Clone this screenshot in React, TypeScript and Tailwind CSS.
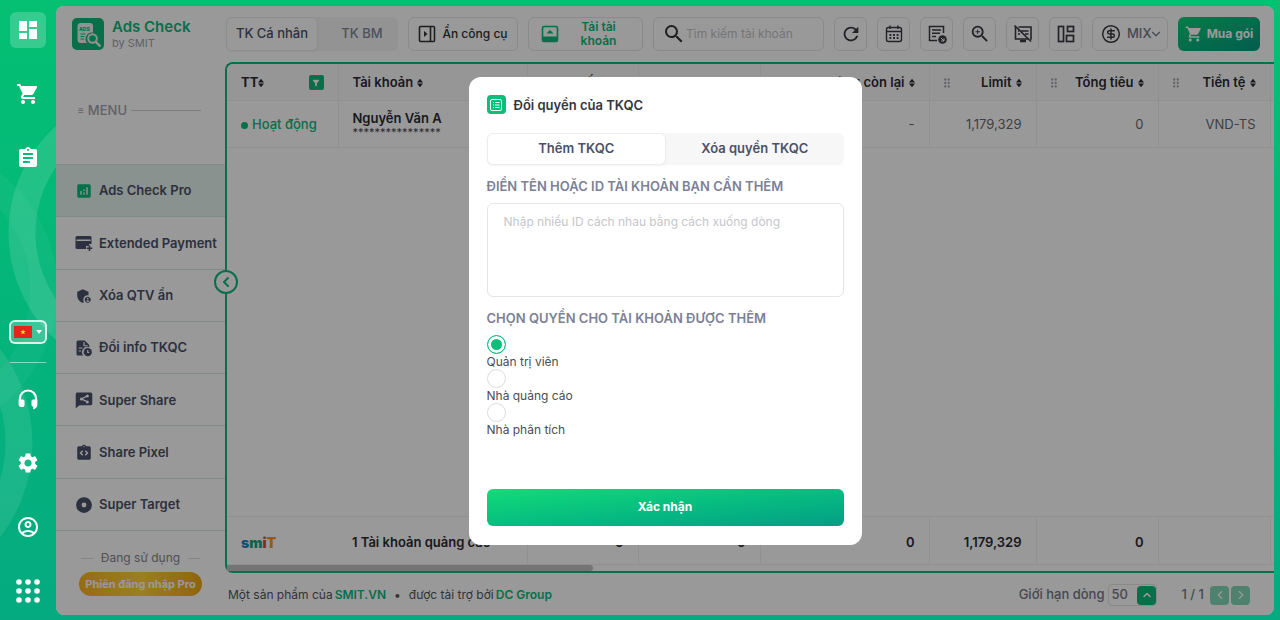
import React from "react";
import {
  MdAdminPanelSettings,
  MdAnalytics,
  MdAssignment,
  MdDashboard,
  MdDragIndicator,
  MdFilterAlt,
  MdIntegrationInstructions,
  MdOutlineAccountCircle,
  MdRefresh,
  MdSearch,
  MdSettings,
  MdShoppingCart,
  MdZoomIn,
} from "react-icons/md";
import {
  ChevronDown,
  ChevronLeft,
  ChevronRight,
  ChevronUp,
  CircleDollarSign,
} from "lucide-react";

function HeadsetIcon() {
  return (
    <svg viewBox="0 0 24 24" className="h-6 w-6" fill="none">
      <path d="M4 14v-2.500a8 8 0 0 1 16 0V14" stroke="currentColor" strokeWidth="2.200" />
      <path
        d="M2.600 12.500H7a1.500 1.500 0 0 1 1.500 1.500v4A1.800 1.800 0 0 1 6.700 20H5a2.400 2.400 0 0 1-2.400-2.400zM21.400 12.500H17a1.500 1.500 0 0 0-1.500 1.500v4a1.800 1.800 0 0 0 1.800 1.800l-.3 2.700c2.600-.500 4.400-2.500 4.400-5z"
        fill="currentColor"
      />
    </svg>
  );
}

function DotsIcon() {
  return (
    <svg viewBox="0 0 24 24" className="h-6 w-6" fill="currentColor">
      {[3, 12, 21].map((y) =>
        [3, 12, 21].map((x) => <circle key={`${x}-${y}`} cx={x} cy={y} r="2.800" />)
      )}
    </svg>
  );
}

function CardPlusIcon() {
  return (
    <svg viewBox="0 0 18 18" className="h-[18px] w-[18px] shrink-0" fill="currentColor">
      <path d="M2 2h13a1.500 1.500 0 0 1 1.500 1.500V10H14v2h-3v3H2A1.500 1.500 0 0 1 .5 13.500v-10A1.500 1.500 0 0 1 2 2z" />
      <path d="M1.500 6.200h14" stroke="white" strokeWidth="1.600" />
      <path d="M14.500 11.500v5.500M11.800 14.200h5.500" stroke="currentColor" strokeWidth="1.600" />
    </svg>
  );
}

function FileInfoIcon() {
  return (
    <svg viewBox="0 0 24 24" className="h-[18px] w-[18px] shrink-0" fill="currentColor">
      <path d="M4 2h9l6 6v3a7 7 0 0 0-8 11H4a2 2 0 0 1-2-2V4a2 2 0 0 1 2-2z" />
      <path d="M12 4v5h5M5 12h5M5 16h3" stroke="white" strokeWidth="1.600" fill="none" />
      <circle cx="17" cy="17.500" r="5.500" />
      <path d="M17 14.500v3.500h2" stroke="white" strokeWidth="1.500" fill="none" />
    </svg>
  );
}

function ShareBubbleIcon() {
  return (
    <svg viewBox="0 0 24 24" className="h-[18px] w-[18px] shrink-0" fill="currentColor">
      <path d="M3 2h18a2 2 0 0 1 2 2v13a2 2 0 0 1-2 2H6l-5 4V4a2 2 0 0 1 2-2z" />
      <path d="M16.500 6.500l-8 4 8 4" stroke="white" strokeWidth="1.600" fill="none" />
      <circle cx="16.500" cy="6.500" r="2" fill="white" />
      <circle cx="8.500" cy="10.500" r="2" fill="white" />
      <circle cx="16.500" cy="14.500" r="2" fill="white" />
    </svg>
  );
}

function TargetIcon() {
  return (
    <svg viewBox="0 0 24 24" className="h-[18px] w-[18px] shrink-0">
      <circle cx="12" cy="12" r="10.500" fill="currentColor" />
      <circle cx="12" cy="12" r="3.200" fill="white" />
    </svg>
  );
}

function AdsLogo() {
  return (
    <svg viewBox="0 0 32 32" className="h-8 w-8 shrink-0">
      <rect width="32" height="32" rx="5" fill="#0cb97a" />
      <path
        d="M8 5h10a3 3 0 0 1 3 3v6.500a6.500 6.500 0 0 0-6 10.500H8.500a3 3 0 0 1-3-3V8A3 3 0 0 1 8 5z"
        fill="#e8f7f0"
      />
      <text x="7" y="12.500" fontSize="5" fontWeight="800" fill="#0cb97a" fontFamily="Inter, sans-serif">
        ADS
      </text>
      <path d="M8.500 16h5M8.500 18.500h4M8.500 21h3.500" stroke="#0cb97a" strokeWidth="1.200" />
      <circle cx="20.500" cy="20.500" r="4.300" fill="none" stroke="#e8f7f0" strokeWidth="2" />
      <path d="M23.800 23.800l4 4" stroke="#e8f7f0" strokeWidth="2.400" strokeLinecap="round" />
    </svg>
  );
}

function PanelIcon() {
  return (
    <svg viewBox="0 0 18 18" className="h-[18px] w-[18px]" fill="none" stroke="currentColor" strokeWidth="1.600">
      <rect x="1.500" y="1.500" width="15" height="15" rx="1" />
      <path d="M12.500 1.500v15" />
      <path d="M6 6l3.500 3L6 12z" fill="currentColor" stroke="none" />
    </svg>
  );
}

function UploadPanelIcon() {
  return (
    <svg viewBox="0 0 18 18" className="h-[18px] w-[18px] shrink-0" fill="none">
      <rect x="1.500" y="1.500" width="15" height="15" rx="1.500" stroke="currentColor" strokeWidth="1.600" />
      <path d="M1.500 11.500h15V16a1 1 0 0 1-1 1h-13a1 1 0 0 1-1-1z" fill="currentColor" />
      <path d="M5.500 8.500L9 5l3.500 3.500z" fill="currentColor" />
    </svg>
  );
}

function CalendarIcon() {
  return (
    <svg viewBox="0 0 20 20" className="h-5 w-5" fill="none" stroke="currentColor" strokeWidth="1.400">
      <rect x="2.500" y="3.500" width="15" height="14" rx="2" />
      <path d="M2.500 7.500h15M6 1.500v3.500M14 1.500v3.500" />
      <path d="M5.500 11h9M5.500 14h9" strokeDasharray="1.800 1.800" strokeWidth="1.800" />
    </svg>
  );
}

function NoteIcon() {
  return (
    <svg viewBox="0 0 20 20" className="h-5 w-5" fill="none" stroke="currentColor" strokeWidth="1.500">
      <path d="M10 16.500H2.500v-14h14V9" />
      <path d="M5 6h9M5 9.300h8M5 12.500h4" />
      <circle cx="15.500" cy="15.500" r="4.300" fill="currentColor" stroke="none" />
      <path d="M13.800 13.800l3.200 3.200M17 14v3h-3" stroke="white" strokeWidth="1" />
    </svg>
  );
}

function ScreenOffIcon() {
  return (
    <svg viewBox="0 0 20 20" className="h-5 w-5" fill="none" stroke="currentColor" strokeWidth="1.600">
      <path d="M5.500 3H18v12h-1M15 15H2.500V3" />
      <path d="M8 7h7.500M12 10h3.500M5 10h2M5 7h1" strokeWidth="1.300" />
      <path d="M7 17h6" strokeWidth="2.600" />
      <path d="M1.500 1.500l16.500 16" />
    </svg>
  );
}

function ColumnsIcon() {
  return (
    <svg viewBox="0 0 20 20" className="h-5 w-5" fill="none" stroke="currentColor" strokeWidth="1.700">
      <rect x="2.500" y="2.500" width="5" height="15" />
      <rect x="11.500" y="2.500" width="6" height="5" />
      <rect x="10.500" y="11.500" width="7" height="6" />
    </svg>
  );
}

function SortIcon() {
  return (
    <svg viewBox="0 0 6 10" className="h-2.5 w-1.5 shrink-0" fill="currentColor">
      <path d="M0 4.500L3 .8l3 3.700zM0 5.500l3 3.700 3-3.700z" />
    </svg>
  );
}

function RailRings() {
  return (
    <svg className="absolute inset-0 h-full w-14" fill="none" stroke="white">
      <circle cx="153" cy="233" r="131" strokeOpacity="0.12" strokeWidth="27" />
      <circle cx="-120" cy="443" r="139" strokeOpacity="0.09" strokeWidth="27" />
      <circle cx="-90" cy="290" r="134" strokeOpacity="0.04" strokeWidth="27" />
    </svg>
  );
}

const railTop = [
  { label: "Cart", icon: <MdShoppingCart className="h-6 w-6" /> },
  { label: "Orders", icon: <MdAssignment className="h-6 w-6" /> },
];

const railBottom = [
  { label: "Support", icon: <HeadsetIcon /> },
  { label: "Settings", icon: <MdSettings className="h-6 w-6" /> },
  { label: "Account", icon: <MdOutlineAccountCircle className="h-6 w-6" /> },
  { label: "Apps", icon: <DotsIcon /> },
];

const menu = [
  { label: "Ads Check Pro", icon: <MdAnalytics className="h-[18px] w-[18px] shrink-0 text-[#0cb97a]" /> },
  { label: "Extended Payment", icon: <CardPlusIcon /> },
  { label: "Xóa QTV ẩn", icon: <MdAdminPanelSettings className="h-[18px] w-[18px] shrink-0" /> },
  { label: "Đổi info TKQC", icon: <FileInfoIcon /> },
  { label: "Super Share", icon: <ShareBubbleIcon /> },
  { label: "Share Pixel", icon: <MdIntegrationInstructions className="h-[18px] w-[18px] shrink-0" /> },
  { label: "Super Target", icon: <TargetIcon /> },
];

const tools = [
  { label: "Refresh", icon: <MdRefresh className="h-[22px] w-[22px]" /> },
  { label: "Calendar", icon: <CalendarIcon /> },
  { label: "Notes", icon: <NoteIcon /> },
  { label: "Zoom", icon: <MdZoomIn className="h-[22px] w-[22px]" /> },
  { label: "Screen off", icon: <ScreenOffIcon /> },
  { label: "Columns", icon: <ColumnsIcon /> },
];

const columns = [
  { title: "Số dư", value: "0", total: "0" },
  { title: "Dư nợ", value: "-", total: "0" },
  { title: "Ngưỡng còn lại", value: "-", total: "0" },
  { title: "Limit", value: "1,179,329", total: "1,179,329" },
  { title: "Tổng tiêu", value: "0", total: "0" },
  { title: "Tiền tệ", value: "VND-TS", total: "" },
];

const roles = ["Quản trị viên", "Nhà quảng cáo", "Nhà phân tích"];

function Rail() {
  return (
    <aside className="relative flex w-14 shrink-0 flex-col items-center pt-3 pb-[11px] text-white">
      <RailRings />
      <div className="relative flex flex-col items-center gap-7">
        <button aria-label="Dashboard" className="flex h-9 w-9 items-center justify-center rounded-md bg-white/20">
          <MdDashboard className="h-6 w-6" />
        </button>
        {railTop.map((item) => (
          <button key={item.label} aria-label={item.label} className="flex h-9 w-9 items-center justify-center">
            {item.icon}
          </button>
        ))}
      </div>
      <div className="relative mt-auto flex flex-col items-center">
        <button
          aria-label="Tiếng Việt"
          className="flex h-6 w-[38px] items-center justify-center gap-1 rounded-md border-2 border-white/80 bg-white/20"
        >
          <svg viewBox="0 0 18 12" className="h-3 w-[18px]">
            <rect width="18" height="12" fill="#e5231b" />
            <path d="M9 3.500l.7 1.800h1.900l-1.500 1.200.6 1.900L9 7.300 7.300 8.400l.6-1.900-1.500-1.200h1.900z" fill="#ffee1f" />
          </svg>
          <svg viewBox="0 0 6 4" className="h-1 w-1.5" fill="white">
            <path d="M0 0h6L3 4z" />
          </svg>
        </button>
        <div className="mt-[18px] mb-[18px] h-px w-9 bg-white/50" />
        <div className="flex flex-col gap-7">
          {railBottom.map((item) => (
            <button key={item.label} aria-label={item.label} className="flex h-9 w-9 items-center justify-center">
              {item.icon}
            </button>
          ))}
        </div>
      </div>
    </aside>
  );
}

function Sidebar() {
  return (
    <div className="flex w-[169px] shrink-0 flex-col">
      <div className="flex items-center gap-2 px-4 pt-3">
        <AdsLogo />
        <div>
          <div className="text-[15px] leading-[18px] font-semibold text-[#0cb97a]">Ads Check</div>
          <div className="text-[11px] leading-[14px] text-[#a2a2aa]">by SMIT</div>
        </div>
      </div>
      <div className="mt-[52px] flex items-center gap-1 pr-6 pl-[22px] text-[13px] leading-4 font-medium text-[#a2a2aa]">
        <span className="text-[10px]">≡</span>
        <span>MENU</span>
        <span className="h-px flex-1 bg-[#d0d0d4]" />
      </div>
      <nav className="mt-[46px] flex flex-1 flex-col border-t border-[#d2e8e1]">
        {menu.map((item, index) => (
          <a
            key={item.label}
            href="#"
            className={`flex flex-1 items-center gap-1.5 border-b border-[#d2e8e1] pt-px pl-[19px] text-[13px] font-semibold whitespace-nowrap text-[#4b5168] ${
              index === 0 ? "bg-[#e4f3ee]" : ""
            }`}
          >
            {item.icon}
            {item.label}
          </a>
        ))}
      </nav>
      <div className="flex h-[84px] flex-col items-center pt-[17px]">
        <div className="flex items-center gap-2 text-xs leading-5 text-[#85858d]">
          <span className="h-px w-3 bg-[#dddddd]" />
          Đang sử dụng
          <span className="h-px w-3 bg-[#dddddd]" />
        </div>
        <div className="mt-1 rounded-full bg-linear-to-r from-[#fbb41c] via-[#ffd43c] to-[#efa814] px-1.5 text-[11px] leading-6 font-bold whitespace-nowrap text-white">
          Phiên đăng nhập Pro
        </div>
      </div>
    </div>
  );
}

function Toolbar() {
  return (
    <div className="flex items-center gap-2.5 pt-[11px] pr-3.5 pb-[11px] pl-px">
      <div className="flex h-[34px] rounded-md bg-[#f5f5f6] text-[13px] font-medium">
        <button className="w-[92px] rounded-md border border-[#ececee] bg-white text-[#4b5168] shadow-xs">TK Cá nhân</button>
        <button className="w-20 pl-2 text-[#82869a]">TK BM</button>
      </div>
      <button className="flex h-[34px] w-[110px] items-center justify-center gap-1.5 rounded-md border border-[#e6e6ea] text-xs font-medium whitespace-nowrap text-[#333]">
        <PanelIcon />
        Ẩn công cụ
      </button>
      <button className="flex h-[34px] w-[115px] items-center rounded-md border border-[#e6e6ea] pr-1 pl-3 text-xs leading-[14px] font-semibold text-[#0cb97a]">
        <UploadPanelIcon />
        <span className="flex-1 px-4">Tải tài khoản</span>
      </button>
      <div className="flex h-[34px] min-w-0 flex-1 items-center rounded-md border border-[#e6e6ea] px-2">
        <MdSearch className="h-6 w-6 shrink-0 text-[#333]" />
        <input
          aria-label="Tìm kiếm tài khoản"
          placeholder="Tìm kiếm tài khoản"
          className="w-full min-w-0 text-xs outline-none placeholder:text-[#c4c4c8]"
        />
      </div>
      {tools.map((tool) => (
        <button
          key={tool.label}
          aria-label={tool.label}
          className="flex h-[34px] w-[33px] items-center justify-center rounded-md border border-[#e6e6ea] text-[#3a3a42]"
        >
          {tool.icon}
        </button>
      ))}
      <div className="relative flex h-[34px] w-[76px] items-center rounded-md border border-[#e6e6ea] pl-2">
        <CircleDollarSign className="h-5 w-5 shrink-0 text-[#3a3a42]" strokeWidth={1.8} />
        <select
          aria-label="Tiền tệ"
          className="w-full appearance-none pl-1.5 text-[13px] font-medium text-[#74788a]"
        >
          <option>MIX</option>
        </select>
        <ChevronDown className="pointer-events-none absolute right-1 h-3.5 w-3.5 text-[#74788a]" />
      </div>
      <button className="flex h-[34px] w-[82px] items-center justify-center gap-1 rounded-md bg-linear-to-br from-[#10d078] to-[#059a80] text-xs font-bold whitespace-nowrap text-white">
        <MdShoppingCart className="h-[18px] w-[18px]" />
        Mua gói
      </button>
    </div>
  );
}

function AccountTable() {
  return (
    <div className="relative flex min-h-0 flex-1 flex-col rounded-l-lg border-y-2 border-l-2 border-[#0cb97a]">
      <button
        aria-label="Thu gọn"
        className="absolute top-[206px] -left-[13px] z-10 flex h-6 w-6 items-center justify-center rounded-full border-2 border-[#0cb97a] bg-white text-[#0cb97a]"
      >
        <ChevronLeft className="h-4 w-4" strokeWidth={3} />
      </button>
      <div className="min-h-0 flex-1 overflow-hidden rounded-tl-md">
        <table className="h-full w-full table-fixed border-collapse text-[13px] text-[#6a6a70]">
          <colgroup>
            <col className="w-[111px]" />
            <col />
            <col className="w-[111px]" />
            <col className="w-[122px]" />
            <col className="w-[169px]" />
            <col className="w-[107px]" />
            <col className="w-[122px]" />
            <col className="w-[112px]" />
            <col className="w-1" />
          </colgroup>
          <thead className="bg-[#fafbfb] text-[#2b2b33]">
            <tr className="h-9 border-b border-[#f0f0f2]">
              <th className="border-r border-[#f0f0f2] px-3.5 pt-0.5">
                <div className="flex items-center">
                  TT
                  <SortIcon />
                  <span className="ml-auto flex h-[15px] w-[15px] items-center justify-center rounded-xs bg-[#0cb97a] text-white">
                    <MdFilterAlt className="h-2.5 w-2.5" />
                  </span>
                </div>
              </th>
              <th className="px-3.5 pt-0.5">
                <div className="flex items-center gap-1 font-semibold">
                  Tài khoản
                  <SortIcon />
                </div>
              </th>
              {columns.map((column) => (
                <th key={column.title} className="border-x border-[#f0f0f2] px-3.5 pt-0.5">
                  <div className="flex items-center gap-1 font-semibold whitespace-nowrap">
                    <MdDragIndicator className="-ml-1 h-3.5 w-3.5 text-[#a8a8b0]" />
                    <span className="ml-auto">{column.title}</span>
                    <SortIcon />
                  </div>
                </th>
              ))}
              <th />
            </tr>
          </thead>
          <tbody>
            <tr className="h-[47px] border-b border-[#f0f0f2]">
              <td className="border-r border-[#f0f0f2] px-3.5 pt-0.5 font-medium whitespace-nowrap text-[#0cb97a]">
                <span className="mr-1 inline-block h-[7px] w-[7px] rounded-full bg-[#0cb97a]" />
                Hoạt động
              </td>
              <td className="px-3.5 leading-4">
                <div className="font-semibold text-[#2b2b33]">Nguyễn Văn A</div>
                <div className="text-[11px] leading-3 text-[#4a4a50]">****************</div>
              </td>
              {columns.map((column) => (
                <td key={column.title} className="border-x border-[#f0f0f2] px-3.5 pt-0.5 text-right">
                  {column.value}
                </td>
              ))}
              <td />
            </tr>
            <tr className="h-full">
              <td colSpan={9} />
            </tr>
          </tbody>
          <tfoot className="font-semibold text-[#2b2b33]">
            <tr className="h-12 border-y border-[#f0f0f2]">
              <td className="px-3.5 pt-1 text-sm leading-5 font-black">
                <span className="text-[#1b86c4]">s</span>
                <span className="text-[#18a77e]">m</span>
                <span className="text-[#e0483a]">i</span>
                <span className="text-[#ee9a2c]">T</span>
              </td>
              <td className="px-3.5 pt-1 whitespace-nowrap">1 Tài khoản quảng cáo</td>
              {columns.map((column) => (
                <td key={column.title} className="border-x border-[#f0f0f2] px-3.5 pt-1 text-right">
                  {column.total}
                </td>
              ))}
              <td />
            </tr>
          </tfoot>
        </table>
      </div>
      <div className="h-[6px]">
        <div className="h-full w-[35%] rounded-r-full rounded-bl-md bg-[#c2c2c6]" />
      </div>
    </div>
  );
}

function Footer() {
  return (
    <footer className="flex h-[42px] items-center pt-0.5 pr-6 pl-[3px] text-xs whitespace-nowrap text-[#55555d]">
      <span>Một sản phẩm của</span>
      <a href="#" className="ml-0.5 font-semibold text-[#0cb97a]">SMIT.VN</a>
      <span className="mx-2">•</span>
      <span>được tài trợ bởi</span>
      <a href="#" className="ml-0.5 font-semibold text-[#0cb97a]">DC Group</a>
      <div className="ml-auto flex items-center text-[13px] font-medium text-[#74788a]">
        <label htmlFor="row-limit">Giới hạn dòng</label>
        <div className="relative ml-1 flex h-[22px] w-[49px] items-center rounded border border-[#e4e4e8]">
          <select id="row-limit" className="w-full appearance-none pl-0.5">
            <option>50</option>
          </select>
          <span className="pointer-events-none absolute right-0 flex h-[19px] w-[19px] items-center justify-center rounded bg-[#0cb97a] text-white">
            <ChevronUp className="h-3 w-3" strokeWidth={3} />
          </span>
        </div>
        <span className="mr-1.5 ml-6">1 / 1</span>
        <button aria-label="Trang trước" className="mr-0.5 flex h-[19px] w-[19px] items-center justify-center rounded bg-[#82d8b8] text-white">
          <ChevronLeft className="h-3.5 w-3.5" />
        </button>
        <button aria-label="Trang sau" className="flex h-[19px] w-[19px] items-center justify-center rounded bg-[#82d8b8] text-white">
          <ChevronRight className="h-3.5 w-3.5" />
        </button>
      </div>
    </footer>
  );
}

function RoleDialog() {
  return (
    <div
      role="dialog"
      aria-labelledby="role-title"
      className="w-[393px] rounded-xl bg-white px-[18px] pt-[18px] pb-[19px] text-[13px]"
    >
      <div className="flex items-center gap-2">
        <span className="flex h-[19px] w-[19px] items-center justify-center rounded bg-[#0bbf7b]">
          <svg viewBox="0 0 14 14" className="h-3.5 w-3.5" fill="none" stroke="white">
            <rect x="1.500" y="1.500" width="11" height="11" rx="1.500" />
            <path d="M4 4.500h1M6 4.500h4.500M4 7h1M6 7h4.500M4 9.500h1M6 9.500h4.500" />
          </svg>
        </span>
        <h2 id="role-title" className="leading-5 font-semibold text-[#35353d]">
          Đổi quyền của TKQC
        </h2>
      </div>
      <div className="mt-[18px] flex h-8 rounded-md bg-[#f7f7f8] font-semibold text-[#4b5168]">
        <button className="flex-1 rounded-md border border-[#ededf0] bg-white shadow-xs">Thêm TKQC</button>
        <button className="flex-1">Xóa quyền TKQC</button>
      </div>
      <label htmlFor="accounts" className="mt-[11px] block leading-5 font-semibold text-[#7c8196]">
        ĐIỀN TÊN HOẶC ID TÀI KHOẢN BẠN CẦN THÊM
      </label>
      <textarea
        id="accounts"
        placeholder="Nhập nhiều ID cách nhau bằng cách xuống dòng"
        className="mt-[7px] block h-[94px] w-full resize-none rounded-md border border-[#e5e5e8] px-4 py-2 text-xs leading-5 outline-none placeholder:text-[#c6c6ca]"
      />
      <fieldset className="mt-[11px]">
        <legend className="leading-5 font-semibold text-[#7c8196]">CHỌN QUYỀN CHO TÀI KHOẢN ĐƯỢC THÊM</legend>
        <div className="mt-[7px] text-xs">
          {roles.map((role, index) => (
            <label key={role} className="block text-[#4c4c52]">
              <input
                type="radio"
                name="role"
                defaultChecked={index === 0}
                className="block h-[19px] w-[19px] appearance-none rounded-full border border-[#dcdce0] checked:border-[#0bbf7b] checked:bg-[#0bbf7b] checked:inset-ring-3 checked:inset-ring-white"
              />
              <span className="block leading-[15px]">{role}</span>
            </label>
          ))}
        </div>
      </fieldset>
      <button className="mt-[52px] h-[37px] w-full rounded-md bg-linear-to-br from-[#11dc77] to-[#059e85] text-xs font-bold text-white">
        Xác nhận
      </button>
    </div>
  );
}

export default function App() {
  return (
    <div className="flex h-screen bg-linear-to-b from-[#05c073] to-[#05aa80] font-[Inter,sans-serif]">
      <Rail />
      <main className="relative mt-1.5 mr-1.5 mb-[5px] flex min-w-0 flex-1 overflow-hidden rounded-lg bg-white">
        <Sidebar />
        <div className="flex min-w-0 flex-1 flex-col">
          <Toolbar />
          <AccountTable />
          <Footer />
        </div>
        <div className="absolute inset-0 z-20 flex items-center justify-center bg-black/40">
          <RoleDialog />
        </div>
      </main>
    </div>
  );
}
